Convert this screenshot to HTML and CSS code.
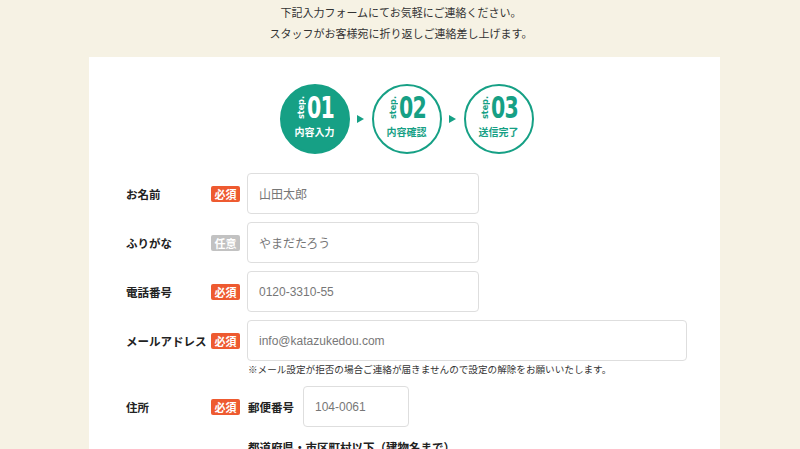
FILE: index.html
```html
<!DOCTYPE html>
<html lang="ja">
<head>
<meta charset="utf-8">
<link rel="stylesheet" href="styles.css">
</head>
<body>
<div class="intro">
  <p>下記入力フォームにてお気軽にご連絡ください。</p>
  <p>スタッフがお客様宛に折り返しご連絡差し上げます。</p>
</div>
<main class="panel">
  <div class="steps">
    <div class="step active">
      <div class="step-top"><span class="step-word">step.</span><span class="step-num">01</span></div>
      <div class="step-label">内容入力</div>
    </div>
    <span class="arrow"></span>
    <div class="step">
      <div class="step-top"><span class="step-word">step.</span><span class="step-num">02</span></div>
      <div class="step-label">内容確認</div>
    </div>
    <span class="arrow"></span>
    <div class="step">
      <div class="step-top"><span class="step-word">step.</span><span class="step-num">03</span></div>
      <div class="step-label">送信完了</div>
    </div>
  </div>

  <form class="form">
    <div class="row">
      <span class="label">お名前</span>
      <span class="badge req">必須</span>
      <div class="field"><div class="input w232">山田太郎</div></div>
    </div>
    <div class="row">
      <span class="label">ふりがな</span>
      <span class="badge opt">任意</span>
      <div class="field"><div class="input w232">やまだたろう</div></div>
    </div>
    <div class="row">
      <span class="label">電話番号</span>
      <span class="badge req">必須</span>
      <div class="field"><div class="input w232">0120-3310-55</div></div>
    </div>
    <div class="row">
      <span class="label">メールアドレス</span>
      <span class="badge req">必須</span>
      <div class="field"><div class="input wfull">info@katazukedou.com</div></div>
    </div>
    <div class="row note-row">
      <span></span><span></span>
      <p class="note">※メール設定が拒否の場合ご連絡が届きませんので設定の解除をお願いいたします。</p>
    </div>
    <div class="row addr">
      <span class="label">住所</span>
      <span class="badge req">必須</span>
      <div class="field zip">
        <span class="sublabel">郵便番号</span>
        <div class="input w106">104-0061</div>
      </div>
    </div>
    <div class="row sub-row">
      <span></span><span></span>
      <span class="sublabel">都道府県・市区町村以下（建物名まで）</span>
    </div>
  </form>
</main>
</body>
</html>
```
FILE: styles.css
```css
* { box-sizing: border-box; }
html, body { margin: 0; padding: 0; }
body {
  background: #f6f2e4;
  font-family: "Noto Sans CJK JP", "Noto Sans", sans-serif;
  color: #333;
  height: 449px;
  overflow: hidden;
}
.intro {
  padding-top: 2px;
  text-align: center;
  font-size: 11px;
  line-height: 21px;
  padding-left: 2px;
}
.intro p { margin: 0; }
.panel {
  background: #fff;
  width: 631px;
  margin: 13px 0 0 89px;
  padding: 27px 33px 40px 37px;
}
.steps {
  display: flex;
  align-items: center;
  justify-content: center;
  gap: 7px;
}
.step {
  width: 70px;
  height: 70px;
  border-radius: 50%;
  border: 2px solid #16a085;
  color: #16a085;
  display: flex;
  flex-direction: column;
  align-items: center;
  justify-content: center;
}
.step.active { background: #16a085; color: #fff; }
.step-top {
  display: flex;
  align-items: center;
  height: 24px;
  margin-top: -5px;
  padding-left: 2px;
}
.step-word {
  writing-mode: vertical-rl;
  transform: rotate(180deg);
  font-family: "DejaVu Sans Condensed", "DejaVu Sans", sans-serif;
  font-weight: bold;
  font-size: 9px;
  line-height: 8px;
  margin-right: 2px;
}
.step-num {
  font-family: "DejaVu Sans Condensed", "DejaVu Sans", sans-serif;
  font-weight: bold;
  font-size: 30px;
  line-height: 24px;
  letter-spacing: -1px;
  transform: scaleX(0.76);
  transform-origin: left center;
  display: inline-block;
  width: 28px;
}
.step-label {
  font-size: 10px;
  font-weight: bold;
  line-height: 12px;
  margin-top: 6px;
}
.arrow {
  width: 0;
  height: 0;
  border-top: 4px solid transparent;
  border-bottom: 4px solid transparent;
  border-left: 7px solid #16a085;
  margin: 0 0.5px;
}
.form {
  margin-top: 19px;
  display: flex;
  flex-direction: column;
  gap: 8px;
}
.row {
  display: grid;
  grid-template-columns: 78px 29px 1fr;
  column-gap: 7px;
  align-items: center;
}
.label {
  font-size: 11.5px;
  font-weight: bold;
  color: #222;
  white-space: nowrap;
}
.badge {
  display: block;
  width: 29px;
  height: 16px;
  line-height: 16px;
  border-radius: 2px;
  color: #fff;
  font-size: 11px;
  font-weight: bold;
  text-align: center;
}
.badge.req { background: #ee5a30; }
.badge.opt { background: #c2c2c2; }
.input {
  height: 41px;
  border: 1px solid #dedede;
  border-radius: 4px;
  padding-left: 11px;
  font-family: "Liberation Sans", "Noto Sans CJK JP", sans-serif;
  font-size: 12px;
  color: #777;
  display: flex;
  align-items: center;
}
.w232 { width: 232px; }
.wfull { width: 440px; }
.w106 { width: 106px; }
.note-row { margin-top: -7px; }
.note {
  margin: 0;
  font-size: 9.6px;
  line-height: 14px;
  color: #333;
  padding-left: 1px;
  white-space: nowrap;
}
.addr { margin-top: 2px; }
.zip {
  display: flex;
  align-items: center;
  gap: 9px;
}
.sublabel {
  font-size: 11.5px;
  font-weight: bold;
  color: #222;
  padding-left: 1px;
  white-space: nowrap;
}
.sub-row { margin-top: 4px; }
```
